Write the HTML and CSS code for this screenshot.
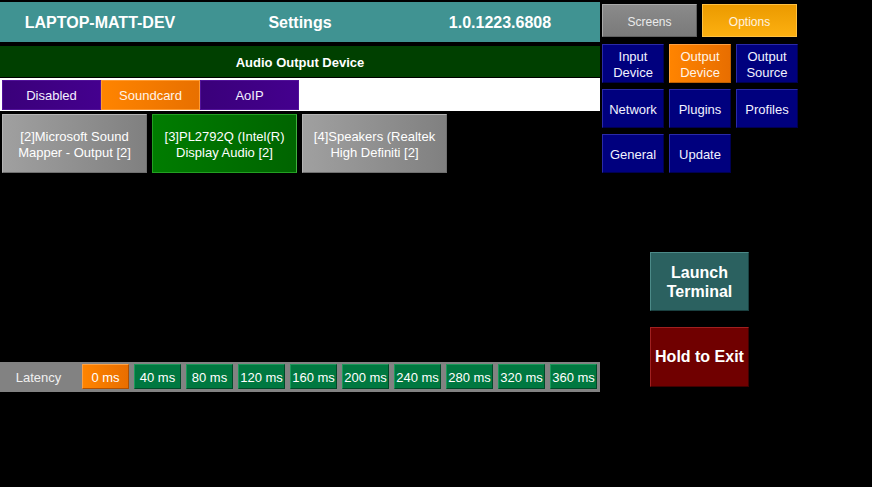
FILE: index.html
```html
<!DOCTYPE html>
<html>
<head>
<meta charset="utf-8">
<link rel="stylesheet" href="styles.css">
</head>
<body>
<div class="app">
  <div class="left">
    <div class="header">
      <div class="hcell">LAPTOP-MATT-DEV</div>
      <div class="hcell">Settings</div>
      <div class="hcell">1.0.1223.6808</div>
    </div>
    <div class="section-title">Audio Output Device</div>
    <div class="tabs">
      <div class="tab purple">Disabled</div>
      <div class="tab orange">Soundcard</div>
      <div class="tab purple">AoIP</div>
    </div>
    <div class="devices">
      <div class="device gray">[2]Microsoft Sound<br>Mapper - Output [2]</div>
      <div class="device green">[3]PL2792Q (Intel(R)<br>Display Audio [2]</div>
      <div class="device gray">[4]Speakers (Realtek<br>High Definiti [2]</div>
    </div>
    <div class="latency">
      <div class="lat-label">Latency</div>
      <div class="lat-btn active">0 ms</div>
      <div class="lat-btn">40 ms</div>
      <div class="lat-btn">80 ms</div>
      <div class="lat-btn">120 ms</div>
      <div class="lat-btn">160 ms</div>
      <div class="lat-btn">200 ms</div>
      <div class="lat-btn">240 ms</div>
      <div class="lat-btn">280 ms</div>
      <div class="lat-btn">320 ms</div>
      <div class="lat-btn">360 ms</div>
    </div>
  </div>
  <div class="right">
    <div class="topnav">
      <div class="nav-btn screens">Screens</div>
      <div class="nav-btn options">Options</div>
    </div>
    <div class="menu">
      <div class="mbtn">Input<br>Device</div>
      <div class="mbtn sel">Output<br>Device</div>
      <div class="mbtn">Output<br>Source</div>
      <div class="mbtn">Network</div>
      <div class="mbtn">Plugins</div>
      <div class="mbtn">Profiles</div>
      <div class="mbtn">General</div>
      <div class="mbtn">Update</div>
    </div>
    <div class="big launch">Launch<br>Terminal</div>
    <div class="big exit">Hold to Exit</div>
  </div>
</div>
</body>
</html>
```

FILE: styles.css
```css
html, body {
  margin: 0;
  padding: 0;
  background: #000;
}
body {
  width: 872px;
  height: 487px;
  overflow: hidden;
  font-family: "Liberation Sans", Arial, sans-serif;
  color: #fff;
}
.app {
  display: flex;
}
.left {
  width: 600px;
  display: flex;
  flex-direction: column;
}
.header {
  margin-top: 2px;
  height: 40px;
  background: #409392;
  display: grid;
  grid-template-columns: 200px 200px 200px;
  align-items: center;
  font-weight: bold;
  font-size: 16px;
}
.hcell {
  text-align: center;
  padding-top: 1px;
}
.section-title {
  margin-top: 4px;
  height: 31px;
  box-sizing: border-box;
  padding-top: 2px;
  background: #004000;
  display: flex;
  align-items: center;
  justify-content: center;
  font-weight: bold;
  font-size: 13px;
}
.tabs {
  margin-top: 1px;
  height: 33px;
  background: #fff;
  display: flex;
  padding: 2px 0 0 2px;
  box-sizing: border-box;
}
.tab {
  width: 99px;
  height: 30px;
  box-sizing: border-box;
  display: flex;
  align-items: center;
  justify-content: center;
  font-size: 13px;
  color: #f4f0ff;
}
.tab.purple {
  background: linear-gradient(to right, #3a007a, #44008e);
  border: 1px solid #52129a;
}
.tab.orange {
  background: linear-gradient(to right, #ff8400, #e87000);
  border: 1px solid #ff9a30;
  color: #fff4e8;
}
.devices {
  margin-top: 3px;
  padding-left: 2px;
  display: flex;
  gap: 5px;
}
.device {
  width: 145px;
  height: 59px;
  box-sizing: border-box;
  display: flex;
  align-items: center;
  justify-content: center;
  text-align: center;
  font-size: 13px;
  line-height: 16px;
  padding-top: 2px;
}
.device.gray {
  background: linear-gradient(to right, #a0a0a0, #808080);
  border: 1px solid #b4b4b4;
  border-right-color: #707070;
  border-bottom-color: #707070;
}
.device.green {
  background: linear-gradient(to right, #007c00, #006400);
  border: 1px solid #22a022;
  border-right-color: #40b040;
}
.latency {
  margin-top: 189px;
  height: 30px;
  background: #828282;
  display: flex;
  align-items: flex-start;
  padding-top: 2px;
  box-sizing: border-box;
  gap: 5px;
}
.lat-label {
  width: 77px;
  height: 25px;
  box-sizing: border-box;
  padding-top: 2px;
  display: flex;
  align-items: center;
  justify-content: center;
  font-size: 13px;
  color: #f0f0f0;
}
.lat-btn {
  width: 47px;
  height: 25px;
  box-sizing: border-box;
  padding-top: 2px;
  display: flex;
  align-items: center;
  justify-content: center;
  font-size: 13px;
  background: #007840;
  border: 1px solid #1a9a5a;
  border-right-color: #004a28;
  border-bottom-color: #004a28;
}
.lat-btn.active {
  background: linear-gradient(to right, #ff8400, #e86e00);
  border: 1px solid #ffa040;
  border-right-color: #b05000;
  border-bottom-color: #b05000;
}
.right {
  margin-left: 2px;
  padding-top: 4px;
  width: 200px;
}
.topnav {
  display: flex;
  gap: 5px;
}
.nav-btn {
  width: 95px;
  height: 33px;
  box-sizing: border-box;
  padding-top: 3px;
  display: flex;
  align-items: center;
  justify-content: center;
  font-size: 12px;
}
.nav-btn.screens {
  background: linear-gradient(to bottom, #8a8a8a, #7a7a7a);
  border: 1px solid #a8a8a8;
  border-right-color: #606060;
  border-bottom-color: #606060;
  color: #eaeaea;
}
.nav-btn.options {
  background: linear-gradient(to bottom, #eb9a00, #fdb010);
  border: 1px solid #ffc040;
  color: #fff4e0;
}
.menu {
  margin-top: 7px;
  display: grid;
  grid-template-columns: 62px 62px 62px;
  grid-auto-rows: 39px;
  column-gap: 5px;
  row-gap: 6px;
}
.mbtn {
  box-sizing: border-box;
  padding-top: 2px;
  display: flex;
  align-items: center;
  justify-content: center;
  text-align: center;
  font-size: 13px;
  line-height: 16px;
  background: #00007e;
  border: 1px solid #2a2aa8;
  border-right-color: #000050;
  border-bottom-color: #000050;
  color: #f2f2ff;
}
.mbtn.sel {
  background: linear-gradient(to right, #ff8400, #e86e00);
  border: 1px solid #ffa040;
  border-right-color: #c06000;
  border-bottom-color: #c06000;
  color: #fff4e8;
}
.big {
  width: 99px;
  box-sizing: border-box;
  margin-left: 48px;
  display: flex;
  align-items: center;
  justify-content: center;
  text-align: center;
  font-weight: bold;
  font-size: 16px;
  line-height: 19px;
}
.launch {
  margin-top: 79px;
  height: 59px;
  background: #2b6160;
  border: 1px solid #4c8a88;
  border-right-color: #1a4040;
  border-bottom-color: #1a4040;
}
.exit {
  margin-top: 16px;
  height: 60px;
  padding-bottom: 2px;
  background: #700000;
  border: 1px solid #a02020;
  border-right-color: #400000;
  border-bottom-color: #400000;
}
```
